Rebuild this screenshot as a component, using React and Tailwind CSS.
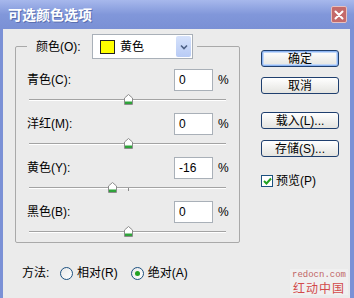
import React from "react";

const FONT = "font-['Liberation_Sans','Noto_Sans_CJK_SC',sans-serif]";

function Thumb() {
  return (
    <svg width="9" height="11" viewBox="0 0 9 11">
      <path d="M0.5 4 L4.5 0.5 L8.5 4 V10.5 H0.5 Z" fill="#ffffff" stroke="#8c8c8c" strokeWidth="1" />
      <rect x="1" y="7.5" width="7" height="2.5" fill="#2fa33a" />
    </svg>
  );
}

function Slider({ value, marker }) {
  return (
    <div className="relative h-[22px] mx-[2px]">
      <div className="absolute left-0 right-0 top-[8px] h-[1px] bg-[#a3a3a3]" />
      <div className="absolute left-0 right-0 top-[9px] h-[1px] bg-white" />
      {marker && <div className="absolute left-1/2 top-[9px] h-[3px] w-[1px] bg-[#8a8a8a]" />}
      <div className="absolute top-[3px] -ml-[4px] flex" style={{ left: `${(value + 100) / 2}%` }}>
        <Thumb />
      </div>
    </div>
  );
}

function Row({ label, value, marker }) {
  return (
    <div>
      <div className="flex items-center h-[22px]">
        <span className="flex-1">{label}</span>
        <div className="w-[39px] h-[22px] bg-white border border-[#a9b0b8] pl-[4px] flex items-center">{value}</div>
        <span className="w-[15px] pl-[5px]">%</span>
      </div>
      <Slider value={Number(value)} marker={marker} />
    </div>
  );
}

function Btn({ children, def, className }) {
  return (
    <div
      className={
        "h-[17px] w-[78px] flex items-center justify-center rounded-[3px] border border-[#1f3f6e] bg-gradient-to-b from-white to-[#e4e4e0] " +
        (def ? "shadow-[inset_0_0_0_1px_#8cb4f2,inset_0_0_0_2px_#c2d8f8] " : "") +
        (className || "")
      }
    >
      {children}
    </div>
  );
}

export default function App() {
  return (
    <div className={`w-[354px] h-[298px] flex flex-col relative overflow-hidden text-[12px] leading-[14px] text-black ${FONT}`}>
      <div className="h-[29px] flex items-center bg-gradient-to-b from-[#a7b8ec] via-[#8197da] to-[#7a90d5] pl-[8px] pr-[7px]">
        <span className="flex-1 text-white font-bold text-[14px] leading-[16px] [text-shadow:1px_1px_0_#5a6fb0]">可选颜色选项</span>
        <div className="w-[16px] h-[17px] rounded-[2px] bg-[#c46a6a] border border-[#e6c0c0] flex items-center justify-center">
          <svg width="10" height="10" viewBox="0 0 10 10">
            <path d="M1.5 1.5 L8.5 8.5 M8.5 1.5 L1.5 8.5" stroke="#ffffff" strokeWidth="2" strokeLinecap="round" />
          </svg>
        </div>
      </div>
      <div className="flex-1 flex bg-[#ebebeb] border-l-[3px] border-r-[4px] border-[#7b91d6]">
        <div className="flex-1 flex flex-col">
          <div className="flex">
            <fieldset className="ml-[12px] mt-[5px] w-[225px] h-[209px] border border-[#a9a9a9] rounded-[2px] px-[11px] pt-[10px] m-0 min-w-0">
              <legend className="pl-[9px] pr-[4px] p-0">
                <div className="flex items-center h-[25px]">
                  <span className="w-[56px]">颜色(O):</span>
                  <div className="w-[101px] h-[25px] bg-white border border-[#a9b0b8] flex items-center pl-[7px] pr-[1px]">
                    <div className="w-[15px] h-[14px] bg-[#ffff00] border border-[#222]" />
                    <span className="ml-[5px] flex-1">黄色</span>
                    <div className="w-[15px] h-[21px] rounded-[2px] bg-gradient-to-b from-[#d6e2fb] to-[#b8cbf5] flex items-center justify-center">
                      <svg width="8" height="6" viewBox="0 0 8 6">
                        <path d="M1 1.5 L4 4.5 L7 1.5" stroke="#4d6185" strokeWidth="1.6" fill="none" />
                      </svg>
                    </div>
                  </div>
                </div>
              </legend>
              <Row label="青色(C):" value="0" />
              <Row label="洋红(M):" value="0" />
              <Row label="黄色(Y):" value="-16" marker />
              <Row label="黑色(B):" value="0" />
            </fieldset>
            <div className="ml-[21px] mt-[21px] w-[78px] flex flex-col">
              <Btn def>确定</Btn>
              <Btn className="mt-[10px]">取消</Btn>
              <Btn className="mt-[18px]">载入(L)...</Btn>
              <Btn className="mt-[11px]">存储(S)...</Btn>
              <div className="mt-[17px] flex items-center h-[13px]">
                <div className="w-[12px] h-[12px] bg-white border border-[#1c5180] flex items-center justify-center">
                  <svg width="9" height="8" viewBox="0 0 9 8">
                    <path d="M1 4 L3.5 6.5 L8 1.5" stroke="#21a121" strokeWidth="2" fill="none" />
                  </svg>
                </div>
                <span className="ml-[3px]">预览(P)</span>
              </div>
            </div>
          </div>
          <div className="mt-[22px] ml-[19px] flex items-center h-[16px]">
            <span className="w-[38px]">方法:</span>
            <div className="w-[13px] h-[13px] rounded-full border border-[#1c5180] bg-gradient-to-br from-[#e8e8e8] to-white" />
            <span className="ml-[4px]">相对(R)</span>
            <div className="ml-[13px] w-[13px] h-[13px] rounded-full border border-[#1c5180] bg-gradient-to-br from-[#e8e8e8] to-white flex items-center justify-center">
              <div className="w-[5px] h-[5px] rounded-full bg-[#21a121]" />
            </div>
            <span className="ml-[4px]">绝对(A)</span>
          </div>
        </div>
      </div>
      <div className="absolute right-[6px] bottom-[3px] w-[58px] h-[26px] bg-[#f2f2f2]/70 flex flex-col items-center justify-center gap-[1px]">
        <span className="font-['Liberation_Mono',monospace] text-[9px] leading-[9px] text-[#c06565]">redocn.com</span>
        <span className="font-['Noto_Sans_CJK_SC',sans-serif] text-[12px] leading-[13px] text-[#d24a4a] tracking-[1px]">红动中国</span>
      </div>
    </div>
  );
}
